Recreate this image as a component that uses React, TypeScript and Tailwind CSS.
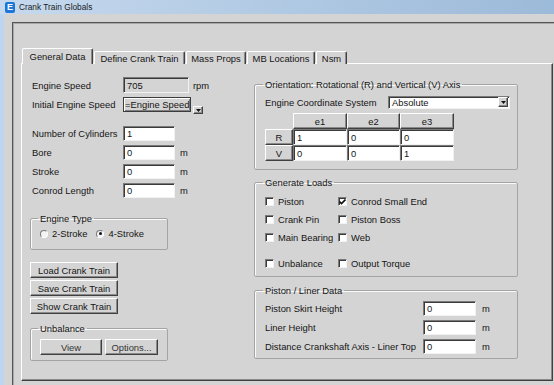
import React from "react";

const sunken =
  "border border-t-[#7a7a7a] border-l-[#7a7a7a] border-r-[#f2f2f2] border-b-[#f2f2f2] shadow-[inset_1px_1px_0_#3a3a3a]";
const raised =
  "border border-t-white border-l-white border-r-[#404040] border-b-[#404040] shadow-[inset_-1px_-1px_0_#8a8a8a]";
const group =
  "border border-[#a4a4a4] rounded-[2px] shadow-[inset_1px_1px_0_#fafafa]";

function TextBox({ value, w, grey }: { value: string; w: string; grey?: boolean }) {
  return (
    <div className={`${sunken} ${w} h-[15px] pl-[3px] flex items-center ${grey ? "bg-[#d4d4d4]" : "bg-white"}`}>
      {value}
    </div>
  );
}

function DownArrow({ className }: { className: string }) {
  return (
    <div className={`${raised} bg-[#d4d4d4] flex items-center justify-center ${className}`}>
      <svg width="5" height="3" viewBox="0 0 5 3">
        <path d="M0 0h5L2.5 3z" fill="#111" />
      </svg>
    </div>
  );
}

function Check({ label, checked }: { label: string; checked?: boolean }) {
  return (
    <div className="flex items-center gap-[4px]">
      <div className={`${sunken} bg-white w-[9px] h-[9px] flex items-center justify-center`}>
        {checked && (
          <svg width="7" height="6" viewBox="0 0 7 6">
            <path d="M0.5 2.5 L2.5 4.5 L6.5 0.5" stroke="#111" strokeWidth="1.6" fill="none" />
          </svg>
        )}
      </div>
      <span>{label}</span>
    </div>
  );
}

function Radio({ label, on }: { label: string; on?: boolean }) {
  return (
    <div className="flex items-center gap-[4px]">
      <div className="w-[8px] h-[8px] rounded-full border border-t-[#7a7a7a] border-l-[#7a7a7a] border-r-white border-b-white bg-[#f4f4f4] flex items-center justify-center">
        {on && <div className="w-[3px] h-[3px] rounded-full bg-[#111]" />}
      </div>
      <span>{label}</span>
    </div>
  );
}

function Field({ label, value, unit }: { label: string; value: string; unit?: string }) {
  return (
    <div className="flex items-center h-[15px] pl-[10px]">
      <span className="w-[91px]">{label}</span>
      <TextBox value={value} w="w-[52px]" />
      {unit && <span className="ml-[5px]">{unit}</span>}
    </div>
  );
}

const tabs = [
  { name: "General Data", w: "w-[71px]" },
  { name: "Define Crank Train", w: "w-[91px]" },
  { name: "Mass Props", w: "w-[60px]" },
  { name: "MB Locations", w: "w-[68px]" },
  { name: "Nsm", w: "w-[31px]" },
];

export default function App() {
  return (
    <div className="w-[554px] h-[385px] overflow-hidden bg-[#d4d4d4] text-[9.4px] leading-[11px] text-[#141414] font-['Liberation_Sans',Arial,sans-serif]">
      {/* title bar */}
      <div className="h-[14px] flex items-center bg-linear-to-r from-[#c6d9ee] to-[#9cbad9]">
        <div className="ml-[5px] w-[10px] h-[11px] rounded-[2px] bg-[#1c76d6] text-white text-[9px] font-bold leading-[11px] text-center">
          E
        </div>
        <span className="ml-[4px] text-[8.3px] text-[#1a1a1a]">Crank Train Globals</span>
      </div>

      <div className="flex h-[371px]">
        <div className="w-[4px] bg-[#bdd5ef]" />
        <div className="ml-[8px] mt-[8px] flex-1 border-t border-l border-t-[#555] border-l-[#555] shadow-[inset_1px_1px_0_#a8a8a8] pl-[8px] pt-[25px]">
          {/* tabs */}
          <div className="relative z-10 flex items-end gap-[1px] h-[16px] pl-[1px]">
            {tabs.map((t, i) => (
              <div
                key={t.name}
                className={`${t.w} ${
                  i === 0 ? "h-[16px] pb-[1px]" : "h-[13px]"
                } flex items-center justify-center bg-[#d4d4d4] border-t border-l border-r border-t-white border-l-white border-r-[#404040] rounded-t-[2px] shadow-[inset_-1px_0_0_#8a8a8a]`}
              >
                {t.name}
              </div>
            ))}
          </div>

          {/* tab panel */}
          <div className={`${raised} -mt-[1px] w-[532px] h-[318px] flex`}>
            {/* left column */}
            <div className="w-[232px] flex flex-col">
              <div className="flex items-center h-[16px] pl-[10px] mt-[13px]">
                <span className="w-[91px]">Engine Speed</span>
                <div className={`${sunken} w-[66px] h-[16px] pl-[3px] flex items-center bg-[#d4d4d4]`}>705</div>
                <span className="ml-[4px]">rpm</span>
              </div>
              <div className="flex items-start h-[17px] pl-[10px] mt-[4px]">
                <span className="w-[91px] leading-[15px]">Initial Engine Speed</span>
                <div className="w-[68px] h-[15px] pl-[1px] flex items-center whitespace-nowrap overflow-hidden border border-[#3c3c3c] shadow-[inset_1px_1px_0_#fff,inset_-1px_-1px_0_#808080]">
                  =Engine Speed
                </div>
                <DownArrow className="ml-[2px] mt-[9px] w-[10px] h-[8px]" />
              </div>

              <div className="mt-[12px] flex flex-col gap-[4px]">
                <Field label="Number of Cylinders" value="1" />
                <Field label="Bore" value="0" unit="m" />
                <Field label="Stroke" value="0" unit="m" />
                <Field label="Conrod Length" value="0" unit="m" />
              </div>

              <fieldset className={`${group} ml-[8px] mt-[15px] w-[138px] h-[37px] pl-[7px]`}>
                <legend className="px-[2px]">Engine Type</legend>
                <div className="flex items-center gap-[9px] mt-[4px] pl-[2px]">
                  <Radio label="2-Stroke" />
                  <Radio label="4-Stroke" on />
                </div>
              </fieldset>

              <div className="ml-[8px] mt-[12px] flex flex-col gap-[2px]">
                {["Load Crank Train", "Save Crank Train", "Show Crank Train"].map((b) => (
                  <div key={b} className={`${raised} w-[88px] h-[16px] flex items-center justify-center`}>
                    {b}
                  </div>
                ))}
              </div>

              <fieldset className={`${group} ml-[8px] mt-[9px] w-[138px] h-[38px] pl-[7px]`}>
                <legend className="px-[2px]">Unbalance</legend>
                <div className="flex gap-[3px] mt-[5px] pl-[2px]">
                  <div className={`${raised} w-[62px] h-[16px] flex items-center justify-center text-[#333]`}>View</div>
                  <div className={`${raised} w-[53px] h-[16px] flex items-center justify-center text-[#333]`}>Options...</div>
                </div>
              </fieldset>
            </div>

            {/* right column */}
            <div className="w-[264px] flex flex-col">
              <fieldset className={`${group} mt-[15px] h-[91px] pl-[8px]`}>
                <legend className="px-[2px]">Orientation: Rotational (R) and Vertical (V) Axis</legend>
                <div className="flex items-center h-[12px] mt-[6px] pl-[2px]">
                  <span className="w-[123px]">Engine Coordinate System</span>
                  <div className={`${sunken} bg-white w-[122px] h-[13px] flex items-center pl-[3px]`}>
                    <span className="flex-1">Absolute</span>
                    <DownArrow className="w-[10px] h-[10px] mr-[1px]" />
                  </div>
                </div>
                <div className="grid grid-cols-[28px_54px_53px_54px] grid-rows-[16px_16px_16px] mt-[5px] ml-[2px] w-[189px]">
                  <div />
                  {["e1", "e2", "e3"].map((h) => (
                    <div key={h} className={`${raised} flex items-center justify-center`}>{h}</div>
                  ))}
                  <div className={`${raised} flex items-center justify-center`}>R</div>
                  {["1", "0", "0"].map((v, i) => (
                    <div key={i} className={`${sunken} bg-white pl-[3px] flex items-center`}>{v}</div>
                  ))}
                  <div className={`${raised} flex items-center justify-center`}>V</div>
                  {["0", "0", "1"].map((v, i) => (
                    <div key={i} className={`${sunken} bg-white pl-[3px] flex items-center`}>{v}</div>
                  ))}
                </div>
              </fieldset>

              <fieldset className={`${group} mt-[7px] h-[100px] pl-[8px]`}>
                <legend className="px-[2px]">Generate Loads</legend>
                <div className="grid grid-cols-[73px_1fr] pl-[2px] mt-[8px] gap-y-[7px]">
                  <Check label="Piston" />
                  <Check label="Conrod Small End" checked />
                  <Check label="Crank Pin" />
                  <Check label="Piston Boss" />
                  <Check label="Main Bearing" />
                  <Check label="Web" />
                </div>
                <div className="grid grid-cols-[73px_1fr] pl-[2px] mt-[15px]">
                  <Check label="Unbalance" />
                  <Check label="Output Torque" />
                </div>
              </fieldset>

              <fieldset className={`${group} mt-[8px] h-[74px] pl-[8px]`}>
                <legend className="px-[2px]">Piston / Liner Data</legend>
                <div className="flex flex-col gap-[4px] mt-[5px] pl-[2px]">
                  {["Piston Skirt Height", "Liner Height", "Distance Crankshaft Axis - Liner Top"].map((l) => (
                    <div key={l} className="flex items-center h-[15px]">
                      <span className="w-[158px]">{l}</span>
                      <TextBox value="0" w="w-[53px]" />
                      <span className="ml-[6px]">m</span>
                    </div>
                  ))}
                </div>
              </fieldset>
            </div>
          </div>
        </div>
      </div>
    </div>
  );
}
